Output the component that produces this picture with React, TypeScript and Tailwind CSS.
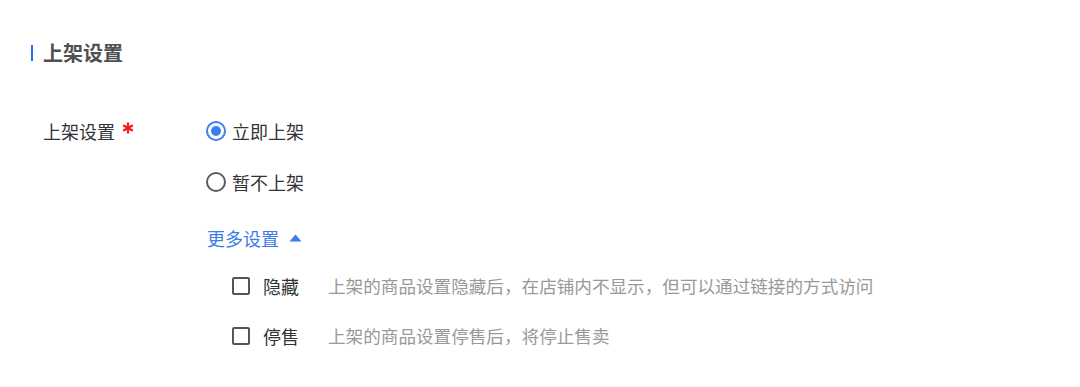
import React from "react";

export default function App() {
  const font = { fontFamily: '"Noto Sans CJK SC", "Noto Sans", sans-serif' };
  return (
    <div className="w-[1080px] h-[387px] bg-white" style={font}>
      <div className="pt-[40px] pl-[31px]">
        <div className="flex items-center h-[26px]">
          <div className="w-[2px] h-[16px] bg-[#1f6ff0]" />
          <div className="ml-[10px] text-[20px] font-bold text-[#505050] leading-none">上架设置</div>
        </div>
      </div>
      <div className="flex pl-[43px] mt-[45px]">
        <div className="w-[163px] h-[40px] flex items-center text-[18px] text-[#333333] leading-none">
          <span>上架设置</span>
          <svg className="ml-[7px] -mt-[6px]" width="12" height="12" viewBox="0 0 12 12">
            <path d="M6 0.5 V11.5 M1.2 3.2 L10.8 8.8 M10.8 3.2 L1.2 8.8" stroke="#f21b1b" strokeWidth="2.2" />
          </svg>
        </div>
        <div className="flex flex-col">
          <div className="h-[40px] flex items-center">
            <span className="w-[20px] h-[20px] rounded-full border-2 border-[#3b7ff0] flex items-center justify-center">
              <span className="w-[10px] h-[10px] rounded-full bg-[#3b7ff0]" />
            </span>
            <span className="ml-[6px] text-[18px] text-[#333333] leading-none">立即上架</span>
          </div>
          <div className="h-[40px] mt-[11px] flex items-center">
            <span className="w-[20px] h-[20px] rounded-full border-2 border-[#5c5c5c]" />
            <span className="ml-[6px] text-[18px] text-[#333333] leading-none">暂不上架</span>
          </div>
          <div className="h-[40px] mt-[16px] flex items-center pl-[1px]">
            <span className="text-[18px] text-[#3b7de9] leading-none">更多设置</span>
            <svg className="ml-[10px]" width="13" height="8" viewBox="0 0 13 8">
              <path d="M6.5 0.5 L12.5 7.5 L0.5 7.5 Z" fill="#3b7de9" />
            </svg>
          </div>
          <div className="h-[40px] mt-[8px] flex items-center pl-[26px]">
            <span className="w-[18px] h-[18px] rounded-[2px] border-2 border-[#555555]" />
            <span className="ml-[13px] text-[18px] text-[#333333] leading-none">隐藏</span>
            <span className="ml-[29px] text-[17.6px] text-[#999999] leading-none">
              上架的商品设置隐藏后，在店铺内不显示，但可以通过链接的方式访问
            </span>
          </div>
          <div className="h-[40px] mt-[10px] flex items-center pl-[26px]">
            <span className="w-[18px] h-[18px] rounded-[2px] border-2 border-[#555555]" />
            <span className="ml-[13px] text-[18px] text-[#333333] leading-none">停售</span>
            <span className="ml-[29px] text-[17.6px] text-[#999999] leading-none">
              上架的商品设置停售后，将停止售卖
            </span>
          </div>
        </div>
      </div>
    </div>
  );
}
